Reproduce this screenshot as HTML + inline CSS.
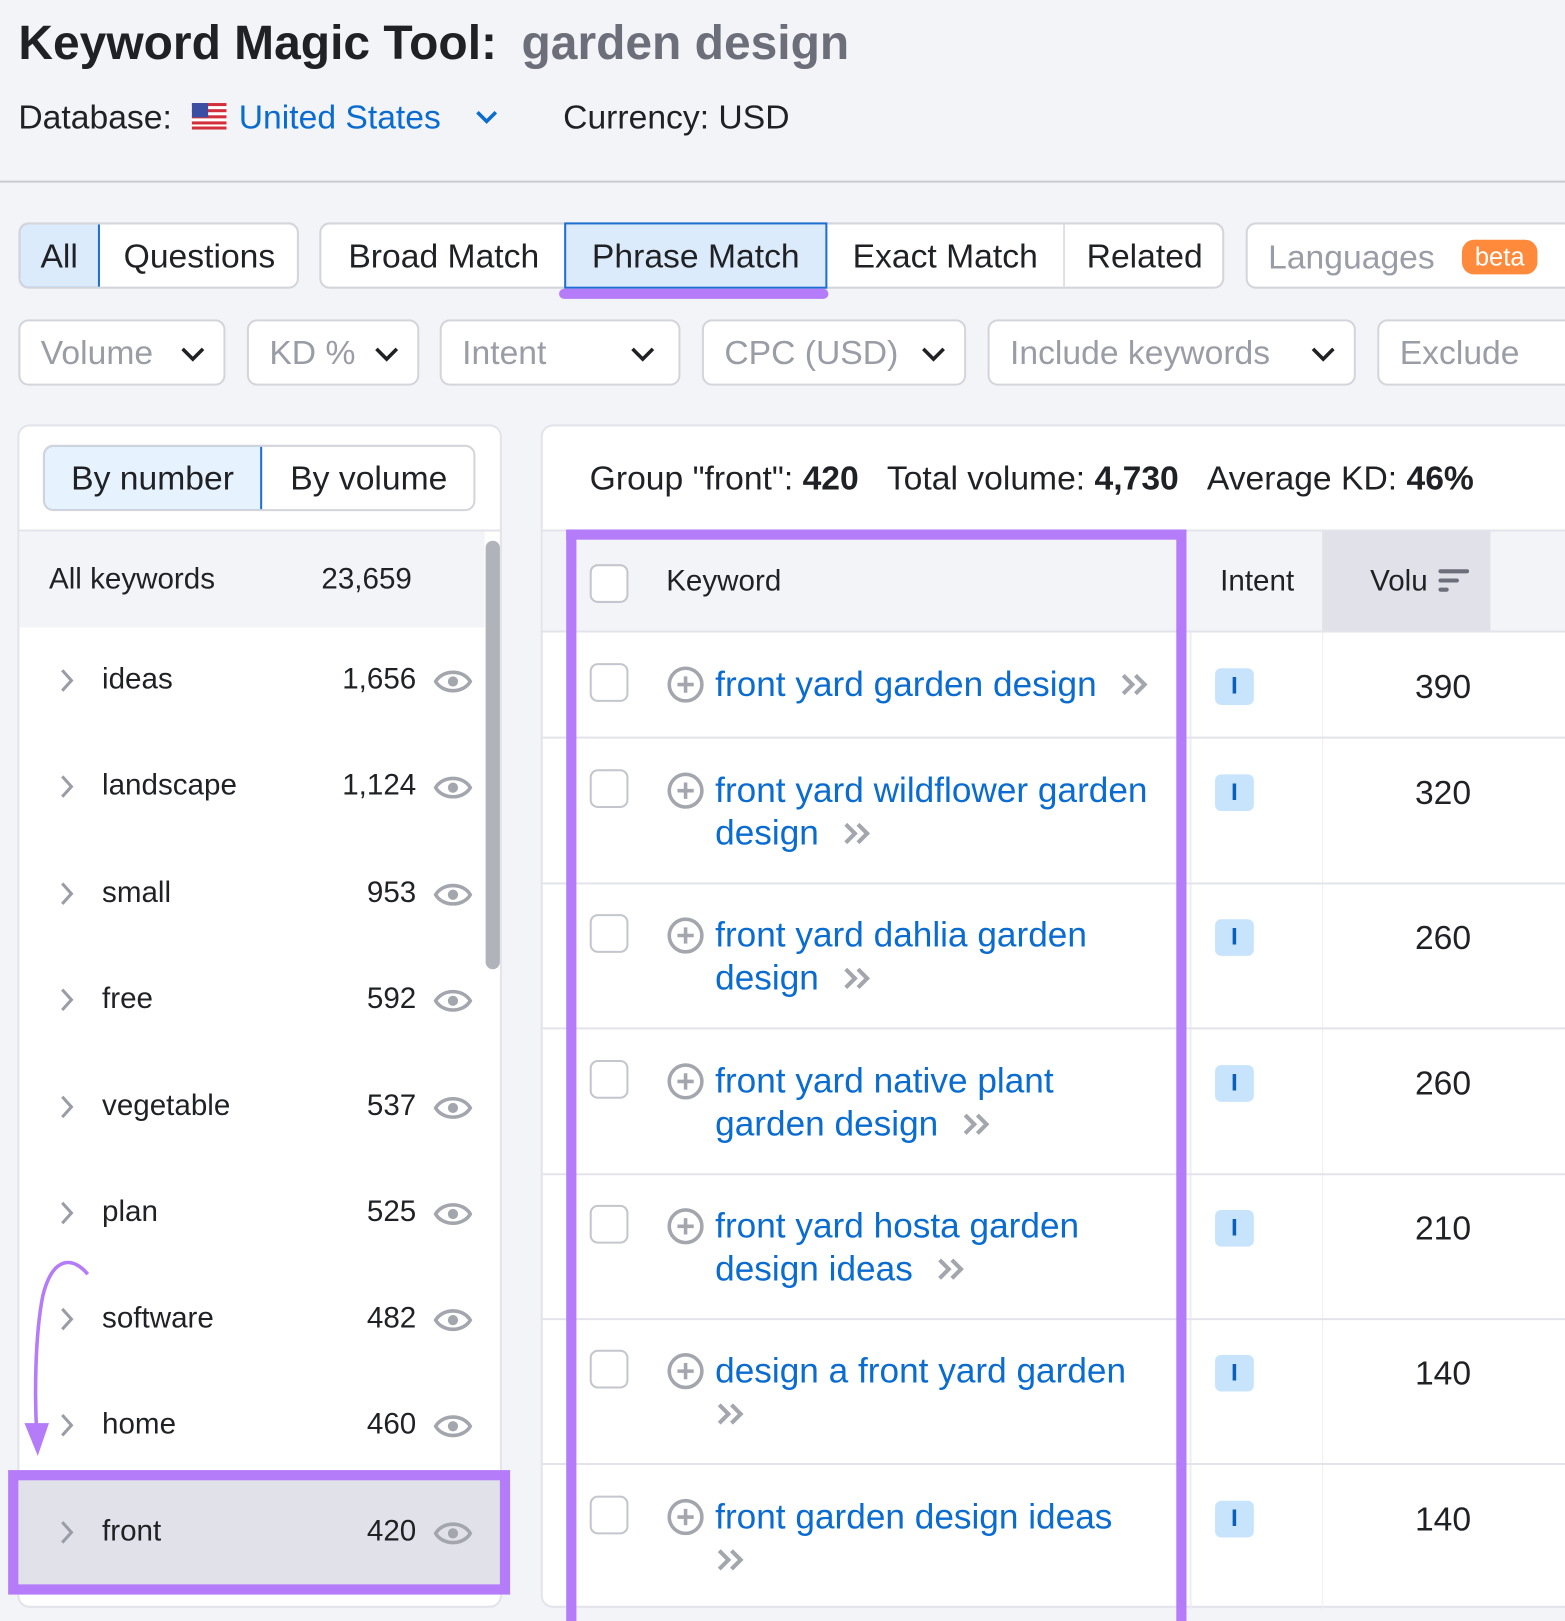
<!DOCTYPE html>
<html><head><meta charset="utf-8"><style>
*{box-sizing:border-box;margin:0;padding:0}
html,body{width:1565px;height:1600px;overflow:hidden;background:#f3f4f8}
body{font-family:"Liberation Sans",Arial,sans-serif;color:#1f2125}
#w{position:absolute;left:0;top:0;width:1534px;height:1568px;transform:scale(1.0202);transform-origin:0 0}
.a{position:absolute;white-space:nowrap}
.box{position:absolute;background:#fff;border:2px solid #d4d5db;border-radius:10px}
.seg{position:absolute;top:0;height:100%;display:flex;align-items:center;justify-content:center;font-size:33px;color:#1f2125}
.sel{background:#dcebfb;border:2px solid #1f6fd0}
.flt{position:absolute;top:313px;height:65px;background:#fff;border:2px solid #d4d5db;border-radius:10px;font-size:33px;color:#9a9ca6;padding-left:20px;display:flex;align-items:center}
.chev{position:absolute;top:24px}
.row{position:absolute;left:17px;width:458px;height:104px}
.row .c{position:absolute;left:40px;top:38px}
.row .t{position:absolute;left:83px;top:34px;font-size:29px}
.row .n{position:absolute;right:67px;top:34px;font-size:29px}
.row .e{position:absolute;left:408px;top:37px}
.kw{position:absolute;left:701px;font-size:34.5px;color:#0a6bd0;line-height:42px}
.kw svg{vertical-align:-2px;margin-left:22px}
.cb{position:absolute;left:578px;width:38px;height:38px;border:2px solid #c4c6cd;border-radius:8px;background:#fff}
.pl{position:absolute;left:653px}
.ib{position:absolute;left:1191px;width:38px;height:36px;background:#c7e4fc;border-radius:6px;color:#0a5fb8;font-weight:bold;font-size:24px;text-align:center;line-height:36px}
.vol a{}
.vol{position:absolute;right:92px;font-size:33px}
.hl{position:absolute;left:530px;width:1004px;height:2px;background:#e3e4ea}
</style></head><body><div id="w">
<div class="a" style="left:18px;top:14px;font-size:47px;font-weight:bold">Keyword Magic Tool:<span style="color:#6c6e79;margin-left:24px">garden design</span></div>
<div class="a" style="left:18px;top:96px;font-size:33px">Database:</div>
<svg class="a" style="left:188px;top:101px" width="34" height="26" viewBox="0 0 34 26"><rect width="34" height="26" fill="#fff"/><g fill="#d22f3a"><rect y="0" width="34" height="3"/><rect y="6" width="34" height="3"/><rect y="12" width="34" height="3"/><rect y="18" width="34" height="3"/><rect y="23" width="34" height="3"/></g><rect width="16" height="14" fill="#3a4fa3"/></svg>
<div class="a" style="left:234px;top:96px;font-size:33px;color:#0a6bd0">United States</div>
<svg class="a" style="left:465px;top:107px" width="24" height="16"><path d="M3 3l9 9 9-9" stroke="#0a6bd0" stroke-width="3.5" fill="none"/></svg>
<div class="a" style="left:552px;top:96px;font-size:33px">Currency: USD</div>
<div class="a" style="left:0;top:177px;width:1534px;height:2px;background:#c9cad1"></div>

<div class="box" style="left:18px;top:218px;width:275px;height:65px;overflow:hidden">
<div class="seg sel" style="left:-2px;width:80px;top:-2px;height:65px;border-radius:10px 0 0 10px">All</div>
<div class="seg" style="left:78px;width:195px">Questions</div></div>
<div class="box" style="left:313px;top:218px;width:887px;height:65px">
<div class="seg" style="left:0;width:240px">Broad Match</div>
<div class="seg sel" style="left:238px;width:258px;top:-2px;height:65px">Phrase Match</div>
<div class="seg" style="left:496px;width:233px;border-right:2px solid #e0e1e6">Exact Match</div>
<div class="seg" style="left:729px;width:156px">Related</div></div>
<div class="a" style="left:548px;top:283px;width:264px;height:10px;background:#b57cf9;border-radius:5px"></div>
<div class="box" style="left:1221px;top:218px;width:330px;height:65px">
<div class="a" style="left:20px;top:13px;font-size:33px;color:#9a9ca6">Languages</div>
<div class="a" style="left:210px;top:15px;width:74px;height:34px;background:#ff8a3b;border-radius:12px;color:#fff;font-size:25px;text-align:center;line-height:34px">beta</div></div>

<div class="flt" style="left:18px;width:203px">Volume<svg class="chev" style="left:156px" width="26" height="18"><path d="M3 3l10 10 10-10" stroke="#1f2125" stroke-width="3.5" fill="none"/></svg></div>
<div class="flt" style="left:242px;width:169px">KD %<svg class="chev" style="left:122px" width="26" height="18"><path d="M3 3l10 10 10-10" stroke="#1f2125" stroke-width="3.5" fill="none"/></svg></div>
<div class="flt" style="left:431px;width:236px">Intent<svg class="chev" style="left:184px" width="26" height="18"><path d="M3 3l10 10 10-10" stroke="#1f2125" stroke-width="3.5" fill="none"/></svg></div>
<div class="flt" style="left:688px;width:259px">CPC (USD)<svg class="chev" style="left:212px" width="26" height="18"><path d="M3 3l10 10 10-10" stroke="#1f2125" stroke-width="3.5" fill="none"/></svg></div>
<div class="flt" style="left:968px;width:361px">Include keywords<svg class="chev" style="left:314px" width="26" height="18"><path d="M3 3l10 10 10-10" stroke="#1f2125" stroke-width="3.5" fill="none"/></svg></div>
<div class="flt" style="left:1350px;width:220px">Exclude</div>

<!-- left panel -->
<div class="a" style="left:17px;top:416px;width:475px;height:1160px;background:#fff;border:2px solid #e3e4ea;border-radius:12px"></div>
<div class="box" style="left:42px;top:436px;width:424px;height:65px;overflow:hidden">
<div class="seg" style="left:-2px;top:-2px;height:65px;width:215px;background:#e6f2fd;border:2px solid #1f6fd0;border-radius:10px 0 0 10px">By number</div>
<div class="seg" style="left:213px;width:209px">By volume</div></div>
<div class="a" style="left:17px;top:519px;width:475px;height:2px;background:#e3e4ea"></div>
<div class="a" style="left:19px;top:521px;width:456px;height:94px;background:#f3f4f8"></div>
<div class="a" style="left:48px;top:552px;font-size:29px">All keywords</div>
<div class="a" style="left:315px;top:552px;font-size:29px">23,659</div>
<div class="a" style="left:476px;top:530px;width:14px;height:420px;background:#b1b3ba;border-radius:7px"></div>

<div class="row" style="top:616px"><svg class="c" width="16" height="26"><path d="M4 3l9 10-9 10" stroke="#9a9ca6" stroke-width="3" fill="none"/></svg><div class="t">ideas</div><div class="n">1,656</div><svg class="e" width="38" height="30"><path d="M2 15C9 3 29 3 36 15 29 27 9 27 2 15Z" stroke="#a4a6ae" stroke-width="3.5" fill="none"/><circle cx="19" cy="15" r="5" fill="#a4a6ae"/></svg></div>
<div class="row" style="top:720px"><svg class="c" width="16" height="26"><path d="M4 3l9 10-9 10" stroke="#9a9ca6" stroke-width="3" fill="none"/></svg><div class="t">landscape</div><div class="n">1,124</div><svg class="e" width="38" height="30"><path d="M2 15C9 3 29 3 36 15 29 27 9 27 2 15Z" stroke="#a4a6ae" stroke-width="3.5" fill="none"/><circle cx="19" cy="15" r="5" fill="#a4a6ae"/></svg></div>
<div class="row" style="top:825px"><svg class="c" width="16" height="26"><path d="M4 3l9 10-9 10" stroke="#9a9ca6" stroke-width="3" fill="none"/></svg><div class="t">small</div><div class="n">953</div><svg class="e" width="38" height="30"><path d="M2 15C9 3 29 3 36 15 29 27 9 27 2 15Z" stroke="#a4a6ae" stroke-width="3.5" fill="none"/><circle cx="19" cy="15" r="5" fill="#a4a6ae"/></svg></div>
<div class="row" style="top:929px"><svg class="c" width="16" height="26"><path d="M4 3l9 10-9 10" stroke="#9a9ca6" stroke-width="3" fill="none"/></svg><div class="t">free</div><div class="n">592</div><svg class="e" width="38" height="30"><path d="M2 15C9 3 29 3 36 15 29 27 9 27 2 15Z" stroke="#a4a6ae" stroke-width="3.5" fill="none"/><circle cx="19" cy="15" r="5" fill="#a4a6ae"/></svg></div>
<div class="row" style="top:1034px"><svg class="c" width="16" height="26"><path d="M4 3l9 10-9 10" stroke="#9a9ca6" stroke-width="3" fill="none"/></svg><div class="t">vegetable</div><div class="n">537</div><svg class="e" width="38" height="30"><path d="M2 15C9 3 29 3 36 15 29 27 9 27 2 15Z" stroke="#a4a6ae" stroke-width="3.5" fill="none"/><circle cx="19" cy="15" r="5" fill="#a4a6ae"/></svg></div>
<div class="row" style="top:1138px"><svg class="c" width="16" height="26"><path d="M4 3l9 10-9 10" stroke="#9a9ca6" stroke-width="3" fill="none"/></svg><div class="t">plan</div><div class="n">525</div><svg class="e" width="38" height="30"><path d="M2 15C9 3 29 3 36 15 29 27 9 27 2 15Z" stroke="#a4a6ae" stroke-width="3.5" fill="none"/><circle cx="19" cy="15" r="5" fill="#a4a6ae"/></svg></div>
<div class="row" style="top:1242px"><svg class="c" width="16" height="26"><path d="M4 3l9 10-9 10" stroke="#9a9ca6" stroke-width="3" fill="none"/></svg><div class="t">software</div><div class="n">482</div><svg class="e" width="38" height="30"><path d="M2 15C9 3 29 3 36 15 29 27 9 27 2 15Z" stroke="#a4a6ae" stroke-width="3.5" fill="none"/><circle cx="19" cy="15" r="5" fill="#a4a6ae"/></svg></div>
<div class="row" style="top:1346px"><svg class="c" width="16" height="26"><path d="M4 3l9 10-9 10" stroke="#9a9ca6" stroke-width="3" fill="none"/></svg><div class="t">home</div><div class="n">460</div><svg class="e" width="38" height="30"><path d="M2 15C9 3 29 3 36 15 29 27 9 27 2 15Z" stroke="#a4a6ae" stroke-width="3.5" fill="none"/><circle cx="19" cy="15" r="5" fill="#a4a6ae"/></svg></div>
<div class="a" style="left:8px;top:1441px;width:492px;height:122px;background:#e0e1e9;border:10px solid #b57cf9"></div>
<div class="row" style="top:1451px"><svg class="c" width="16" height="26"><path d="M4 3l9 10-9 10" stroke="#9a9ca6" stroke-width="3" fill="none"/></svg><div class="t">front</div><div class="n">420</div><svg class="e" width="38" height="30"><path d="M2 15C9 3 29 3 36 15 29 27 9 27 2 15Z" stroke="#a4a6ae" stroke-width="3.5" fill="none"/><circle cx="19" cy="15" r="5" fill="#a4a6ae"/></svg></div>
<svg class="a" style="left:20px;top:1230px" width="72" height="200"><path d="M66 19C52 2 32 0 22 40 14 80 14 140 16 175" stroke="#b57cf9" stroke-width="3.5" fill="none"/><path d="M4 165L28 165 17 197Z" fill="#b57cf9"/></svg>

<!-- right panel -->
<div class="a" style="left:530px;top:416px;width:1020px;height:1160px;background:#fff;border:2px solid #e3e4ea;border-radius:12px"></div>
<div class="a" style="left:578px;top:450px;font-size:33px">Group "front": <b>420</b>&nbsp;&nbsp;&nbsp;Total volume: <b>4,730</b>&nbsp;&nbsp;&nbsp;Average KD: <b>46%</b></div>
<div class="hl" style="top:519px"></div>
<div class="a" style="left:532px;top:521px;width:1002px;height:97px;background:#f3f4f8"></div>
<div class="a" style="left:1296px;top:521px;width:165px;height:97px;background:#e0e1e9"></div>
<div class="a" style="left:1196px;top:554px;font-size:29px">Intent</div>
<div class="a" style="left:1343px;top:554px;font-size:29px">Volu</div>
<svg class="a" style="left:1410px;top:557px" width="30" height="26"><g stroke="#6c6e79" stroke-width="4" stroke-linecap="round"><path d="M2 3h26M2 12h16M2 21h6"/></g></svg>
<div class="a" style="left:1166px;top:618px;width:2px;height:960px;background:#eceef2"></div>
<div class="a" style="left:1296px;top:618px;width:1px;height:960px;background:#eceef2"></div>
<div class="hl" style="top:618px"></div>
<div class="hl" style="top:722px"></div>
<div class="hl" style="top:865px"></div>
<div class="hl" style="top:1007px"></div>
<div class="hl" style="top:1150px"></div>
<div class="hl" style="top:1292px"></div>
<div class="hl" style="top:1434px"></div>

<div class="cb" style="top:553px"></div>
<div class="a" style="left:653px;top:554px;font-size:29px">Keyword</div>

<!-- rows -->
<div class="cb" style="top:650px"></div><svg class="pl" style="top:652px" width="38" height="38"><circle cx="19" cy="19" r="16" stroke="#a4a6ae" stroke-width="3.5" fill="none"/><path d="M19 11v16M11 19h16" stroke="#a4a6ae" stroke-width="3.5"/></svg>
<div class="kw a" style="top:650px">front yard garden design<svg width="30" height="26"><path d="M4 4l9 9-9 9M16 4l9 9-9 9" stroke="#a4a6ae" stroke-width="4" fill="none"/></svg></div>
<div class="ib" style="top:655px">I</div><div class="vol a" style="top:654px">390</div>

<div class="cb" style="top:754px"></div><svg class="pl" style="top:756px" width="38" height="38"><circle cx="19" cy="19" r="16" stroke="#a4a6ae" stroke-width="3.5" fill="none"/><path d="M19 11v16M11 19h16" stroke="#a4a6ae" stroke-width="3.5"/></svg>
<div class="kw a" style="top:754px">front yard wildflower garden<br>design<svg width="30" height="26"><path d="M4 4l9 9-9 9M16 4l9 9-9 9" stroke="#a4a6ae" stroke-width="4" fill="none"/></svg></div>
<div class="ib" style="top:759px">I</div><div class="vol a" style="top:758px">320</div>

<div class="cb" style="top:896px"></div><svg class="pl" style="top:898px" width="38" height="38"><circle cx="19" cy="19" r="16" stroke="#a4a6ae" stroke-width="3.5" fill="none"/><path d="M19 11v16M11 19h16" stroke="#a4a6ae" stroke-width="3.5"/></svg>
<div class="kw a" style="top:896px">front yard dahlia garden<br>design<svg width="30" height="26"><path d="M4 4l9 9-9 9M16 4l9 9-9 9" stroke="#a4a6ae" stroke-width="4" fill="none"/></svg></div>
<div class="ib" style="top:901px">I</div><div class="vol a" style="top:900px">260</div>

<div class="cb" style="top:1039px"></div><svg class="pl" style="top:1041px" width="38" height="38"><circle cx="19" cy="19" r="16" stroke="#a4a6ae" stroke-width="3.5" fill="none"/><path d="M19 11v16M11 19h16" stroke="#a4a6ae" stroke-width="3.5"/></svg>
<div class="kw a" style="top:1039px">front yard native plant<br>garden design<svg width="30" height="26"><path d="M4 4l9 9-9 9M16 4l9 9-9 9" stroke="#a4a6ae" stroke-width="4" fill="none"/></svg></div>
<div class="ib" style="top:1044px">I</div><div class="vol a" style="top:1043px">260</div>

<div class="cb" style="top:1181px"></div><svg class="pl" style="top:1183px" width="38" height="38"><circle cx="19" cy="19" r="16" stroke="#a4a6ae" stroke-width="3.5" fill="none"/><path d="M19 11v16M11 19h16" stroke="#a4a6ae" stroke-width="3.5"/></svg>
<div class="kw a" style="top:1181px">front yard hosta garden<br>design ideas<svg width="30" height="26"><path d="M4 4l9 9-9 9M16 4l9 9-9 9" stroke="#a4a6ae" stroke-width="4" fill="none"/></svg></div>
<div class="ib" style="top:1186px">I</div><div class="vol a" style="top:1185px">210</div>

<div class="cb" style="top:1323px"></div><svg class="pl" style="top:1325px" width="38" height="38"><circle cx="19" cy="19" r="16" stroke="#a4a6ae" stroke-width="3.5" fill="none"/><path d="M19 11v16M11 19h16" stroke="#a4a6ae" stroke-width="3.5"/></svg>
<div class="kw a" style="top:1323px">design a front yard garden<br><svg width="30" height="26" style="margin-left:0"><path d="M4 4l9 9-9 9M16 4l9 9-9 9" stroke="#a4a6ae" stroke-width="4" fill="none"/></svg></div>
<div class="ib" style="top:1328px">I</div><div class="vol a" style="top:1327px">140</div>

<div class="cb" style="top:1466px"></div><svg class="pl" style="top:1468px" width="38" height="38"><circle cx="19" cy="19" r="16" stroke="#a4a6ae" stroke-width="3.5" fill="none"/><path d="M19 11v16M11 19h16" stroke="#a4a6ae" stroke-width="3.5"/></svg>
<div class="kw a" style="top:1466px">front garden design ideas<br><svg width="30" height="26" style="margin-left:0"><path d="M4 4l9 9-9 9M16 4l9 9-9 9" stroke="#a4a6ae" stroke-width="4" fill="none"/></svg></div>
<div class="ib" style="top:1471px">I</div><div class="vol a" style="top:1470px">140</div>

<div class="a" style="left:555px;top:519px;width:608px;height:1070px;border:10px solid #b57cf9;border-bottom:none"></div>
</div></body></html>
